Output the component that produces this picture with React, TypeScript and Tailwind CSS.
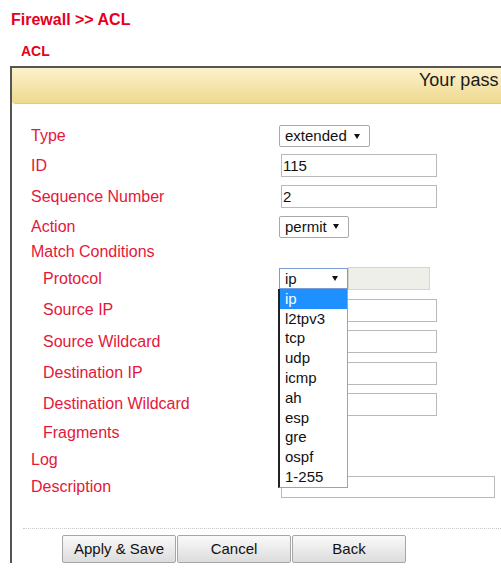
import React from 'react';

const labelCls = 'text-[16px] leading-[18px] text-[#e5173a] whitespace-nowrap';

const protocols = ['ip', 'l2tpv3', 'tcp', 'udp', 'icmp', 'ah', 'esp', 'gre', 'ospf', '1-255'];

function Arrow() {
  return (
    <svg width="6" height="5" viewBox="0 0 6 5" className="shrink-0">
      <polygon points="0,0 6,0 3,5" fill="#111" />
    </svg>
  );
}

interface SelectProps {
  value: string;
  className: string;
}

function FakeSelect({ value, className }: SelectProps) {
  return (
    <div
      className={`flex items-center justify-between bg-white rounded-[2px] border pl-[5px] pr-[9px] text-[15px] leading-[18px] text-[#111] ${className}`}
    >
      <span>{value}</span>
      <Arrow />
    </div>
  );
}

function TextInput({ value = '', className = 'w-[156px] h-[23px]' }: { value?: string; className?: string }) {
  return (
    <div
      className={`ml-[2px] flex items-center border border-[#b9b9b9] bg-white pl-[1px] text-[15px] leading-[18px] text-[#111] ${className}`}
    >
      {value}
    </div>
  );
}

function Row({ h, label, indent, children }: { h: string; label: string; indent?: boolean; children?: React.ReactNode }) {
  return (
    <div className={`flex items-center ${h}`}>
      <div className={`w-[248px] shrink-0 ${indent ? 'pl-[12px]' : ''}`}>
        <span className={labelCls}>{label}</span>
      </div>
      <div className="flex items-center">{children}</div>
    </div>
  );
}

export default function App() {
  return (
    <div className="w-[501px] h-[569px] overflow-hidden bg-white font-['Liberation_Sans',Arial,sans-serif]">
      <div className="pt-[11px] pl-[11px] text-[16px] leading-[18px] font-bold text-[#e60020]">Firewall &gt;&gt; ACL</div>
      <div className="mt-[14px] pl-[21px] text-[14px] leading-[16px] font-bold text-[#e60020]">ACL</div>

      <div className="mt-[7px] ml-[10px] border-t-2 border-l-2 border-[#555]">
        {/* notice banner, message runs past the window edge */}
        <div className="h-[36px] rounded-bl-[4px] bg-linear-to-b from-[#fcf1cb] to-[#efd98e] border-b border-[#e3c97a] pl-[407px] pt-[2px] overflow-hidden">
          <div className="w-[82px] overflow-hidden whitespace-nowrap text-[18px] leading-[21px] text-[#1a1a1a]">
            Your pass
          </div>
        </div>

        <div className="pt-[17px] pl-[19px]">
          <Row h="h-[30px]" label="Type">
            <FakeSelect value="extended" className="w-[91px] h-[22px] border-[#a9a9a9]" />
          </Row>
          <Row h="h-[29px]" label="ID">
            <TextInput value="115" />
          </Row>
          <Row h="h-[33px]" label="Sequence Number">
            <TextInput value="2" />
          </Row>
          <Row h="h-[27px]" label="Action">
            <FakeSelect value="permit" className="w-[70px] h-[22px] border-[#a9a9a9]" />
          </Row>
          <Row h="h-[23px]" label="Match Conditions" />
          <Row h="h-[31px]" label="Protocol" indent>
            <div className="relative z-10">
              <FakeSelect value="ip" className="w-[69px] h-[21px] border-[#7a9cd6] rounded-none" />
              <div className="absolute left-[-1px] top-full w-[70px] bg-white border-l-2 border-l-[#222] border-r border-b border-r-[#8aa6d8] border-b-[#8aa6d8]">
                {protocols.map((p, i) => (
                  <div
                    key={p}
                    className={`h-[19.8px] flex items-center pl-[5px] text-[15px] leading-[18px] ${
                      i === 0 ? 'bg-[#1e90ff] text-white' : 'text-[#111]'
                    }`}
                  >
                    {p}
                  </div>
                ))}
              </div>
            </div>
            <div className="w-[82px] h-[23px] bg-[#efefe9] border border-[#d4d4d0]" />
          </Row>
          <Row h="h-[32px]" label="Source IP" indent>
            <TextInput />
          </Row>
          <Row h="h-[31px]" label="Source Wildcard" indent>
            <TextInput />
          </Row>
          <Row h="h-[32px]" label="Destination IP" indent>
            <TextInput />
          </Row>
          <Row h="h-[30px]" label="Destination Wildcard" indent>
            <TextInput />
          </Row>
          <Row h="h-[28px]" label="Fragments" indent />
          <Row h="h-[25px]" label="Log" />
          <Row h="h-[30px]" label="Description">
            <TextInput className="w-[214px] h-[22px]" />
          </Row>
        </div>

        <div className="mt-[26px] ml-[11px] border-t border-dotted border-[#c8c8c8]" />

        <div className="mt-[6px] ml-[50px] flex gap-[1px]">
          {['Apply & Save', 'Cancel', 'Back'].map((b) => (
            <button
              key={b}
              className="w-[114px] h-[28px] rounded-[2px] border border-[#a6a6a6] bg-linear-to-b from-[#fafafa] to-[#dcdcdc] text-[15px] leading-[18px] text-[#111]"
            >
              {b}
            </button>
          ))}
        </div>
      </div>
    </div>
  );
}
